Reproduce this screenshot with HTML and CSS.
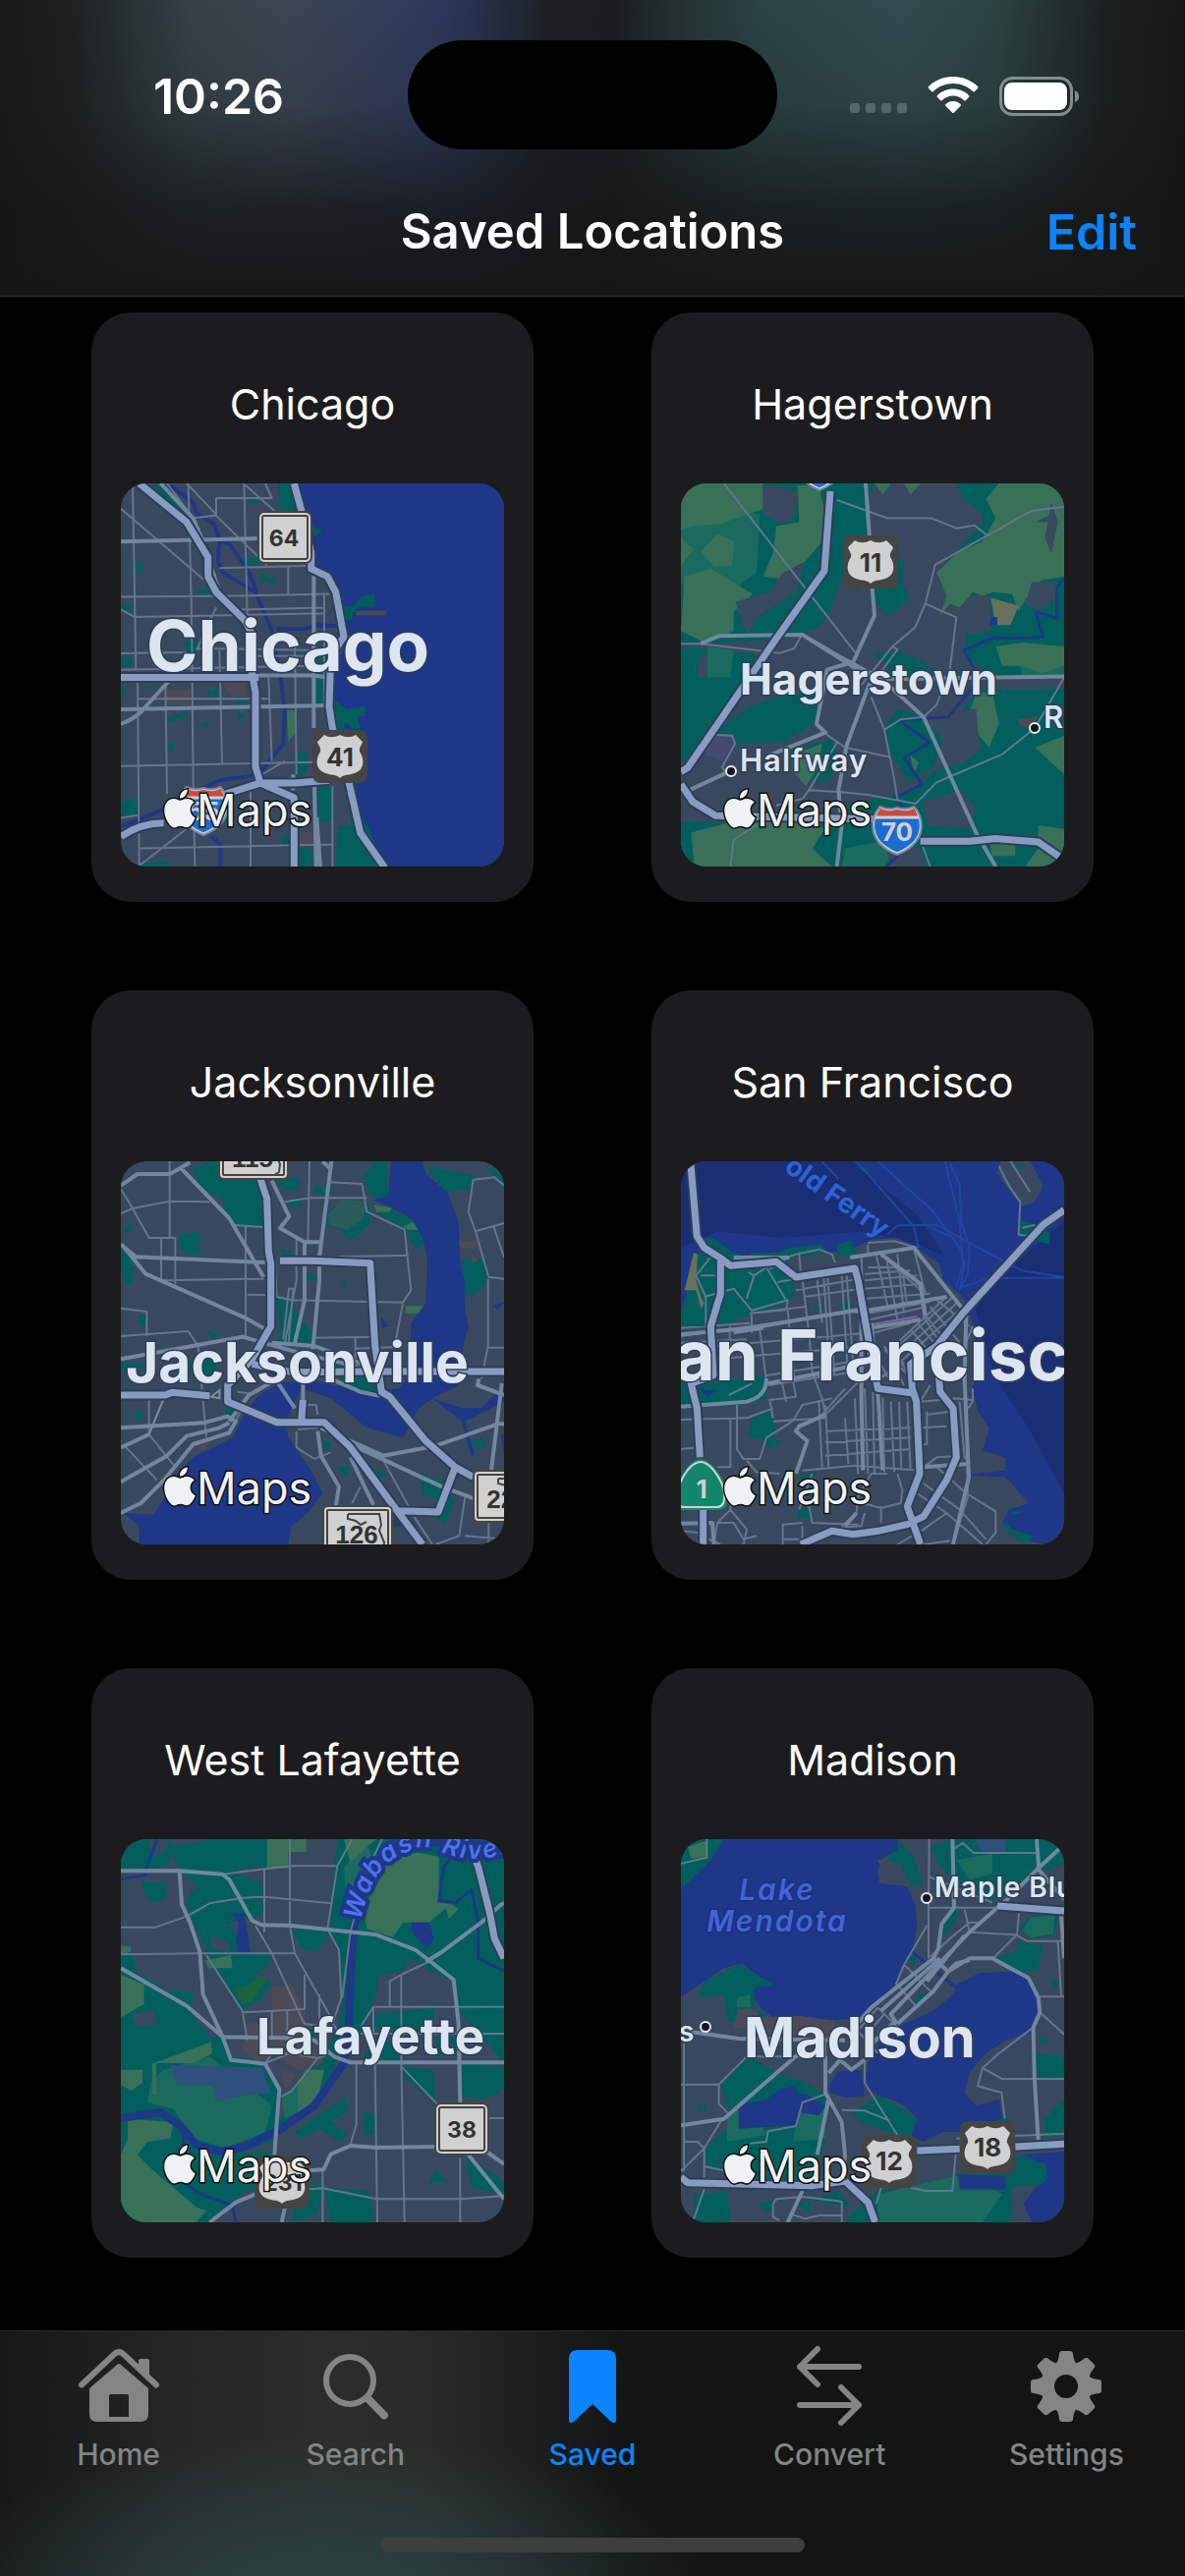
FILE: index.html
```html
<!DOCTYPE html>
<html lang="en">
<head>
<meta charset="utf-8">
<meta name="viewport" content="width=device-width, initial-scale=1">
<title>Saved Locations</title>
<link rel="stylesheet" href="styles.css">
</head>
<body>

<svg class="sprites" aria-hidden="true">
  <symbol id="apple" viewBox="-1 -1 26 26">
    <path d="M12.152 6.896c-.948 0-2.415-1.078-3.96-1.04-2.04.027-3.91 1.183-4.961 3.014-2.117 3.675-.546 9.103 1.519 12.09 1.013 1.454 2.208 3.09 3.792 3.039 1.52-.065 2.09-.987 3.935-.987 1.831 0 2.35.987 3.96.948 1.637-.026 2.676-1.48 3.676-2.948 1.156-1.688 1.636-3.325 1.662-3.415-.039-.013-3.182-1.221-3.22-4.857-.026-3.04 2.48-4.494 2.597-4.559-1.429-2.09-3.623-2.324-4.39-2.376-2-.156-3.675 1.09-4.61 1.09zM15.53 3.83c.843-1.012 1.4-2.427 1.245-3.83-1.207.052-2.662.805-3.532 1.818-.78.896-1.454 2.338-1.273 3.714 1.338.104 2.715-.688 3.559-1.701z"/>
  </symbol>
  <symbol id="us-shield" viewBox="0 0 56 54">
    <rect width="56" height="54" rx="8" fill="#444"/>
    <path fill="#d0d0d0" d="M28 49C24 44 14 47 8 41C3 36 4 28 8 22C9 18 6 16 5 12L12 5C17 8 22 8 28 5C34 8 39 8 44 5L51 12C50 16 47 18 48 22C52 28 53 36 48 41C42 47 32 44 28 49Z"/>
  </symbol>
  <symbol id="interstate" viewBox="0 0 54 54">
    <path fill="#d0d0d0" stroke="#7886a3" stroke-width="2" d="M9 2C15 5 21 5 27 3C33 5 39 5 45 2C52 10 54 20 52 29C49 41 39 48 27 53C15 48 5 41 2 29C0 20 2 10 9 2Z"/>
    <path fill="#1b6cd0" d="M4 15H50C53 31 46 42 27 50C8 42 1 31 4 15Z"/>
    <path fill="#c94b42" d="M9 4C15 7 21 7 27 5C33 7 39 7 45 4L49 12H5Z"/>
  </symbol>
  <symbol id="state-sign" viewBox="0 0 56 54">
    <rect width="56" height="54" rx="7" fill="#444"/>
    <rect x="2" y="2" width="52" height="50" rx="5" fill="#d0d0d0"/>
    <rect x="5" y="5" width="46" height="44" rx="2" fill="none" stroke="#444" stroke-width="2"/>
  </symbol>
  <symbol id="florida-sign" viewBox="0 0 72 54">
    <rect width="72" height="54" rx="6" fill="#444"/>
    <rect x="2" y="2" width="68" height="50" rx="4" fill="#d0d0d0"/>
    <rect x="5" y="5" width="62" height="44" rx="1" fill="none" stroke="#444" stroke-width="2"/>
    <path d="M26 9H58L60 20L58 26L63 38L62 46L57 49M26 9V14L34 16L39 20L45 17" fill="none" stroke="#444" stroke-width="2"/>
  </symbol>
</svg>

<header class="top">
  <div class="status">
    <span class="time">10:26</span>
    <span class="island"></span>
    <div class="indicators">
      <svg width="58" height="38" viewBox="0 0 58 38" aria-hidden="true" fill="#55676a"><rect y="27" width="10" height="10" rx="3"/><rect x="16" y="27" width="10" height="10" rx="3"/><rect x="32" y="27" width="10" height="10" rx="3"/><rect x="48" y="27" width="10" height="10" rx="3"/></svg>
      <svg width="52" height="38" viewBox="0 0 52 38" aria-hidden="true" fill="#fff"><path d="M26 0C36 0 45 4 51 10Q52 11 51 12L48 15Q47 16 46 15C41 10 34 7 26 7S11 10 6 15Q5 16 4 15L1 12Q0 11 1 10C7 4 16 0 26 0Z"/><path d="M26 12.500C32 12.500 38 15 42 19Q43 20 42 21L39 24Q38 25 37 24C34 21 30 19.500 26 19.500S18 21 15 24Q14 25 13 24L10 21Q9 20 10 19C14 15 20 12.500 26 12.500Z"/><path d="M26 25C29 25 31.500 26 33.500 28Q34.500 29 33.500 30L27 36.500Q26 37.500 25 36.500L18.500 30Q17.500 29 18.500 28C20.500 26 23 25 26 25Z"/></svg>
      <svg width="82" height="40" viewBox="0 0 82 40" aria-hidden="true"><rect x="1.500" y="1.500" width="72" height="37" rx="12" fill="none" stroke="#828d8f" stroke-width="3"/><rect x="5" y="6" width="64" height="28" rx="8" fill="#fff"/><path d="M77 14Q81 16 81 20T77 26Z" fill="#828d8f"/></svg>
    </div>
  </div>
  <nav class="navbar">
    <h1>Saved Locations</h1>
    <button class="edit" type="button">Edit</button>
  </nav>
</header>

<main class="grid">
  <article class="card">
    <h2>Chicago</h2>
    <svg class="map" viewBox="0 0 390 390" role="img" aria-label="Map of Chicago">
      <svg width="390" height="390" viewBox="99 460 1170 987" preserveAspectRatio="none">
        <path class="water" d="M628 460H1269V1447H905L830 1360 815 1230 850 1100 755 1090 745 960 790 860 760 740 720 690 680 660 655 540Z"/>
        <path class="park" d="M580 460H628L652 534H585ZM145 665H165V690H145ZM99 768L130 775V792H99ZM333 732H368V747H340ZM525 688L550 705 572 700V720L545 712 527 716ZM490 500H520V512H490ZM455 665L520 645V670H470ZM680 570L715 580 690 598ZM780 778L812 775 835 752 875 745V775L815 783 800 815 780 808 770 795ZM692 875H715V1025H695ZM752 1018L790 1042 843 1035 845 1058 820 1058 830 1090 810 1095 785 1075 778 1100H745ZM99 905L130 910V930H99ZM365 992L395 988V1010H365ZM240 1068L298 1046 300 1062 245 1078ZM335 1085L365 1072V1088ZM455 1020L485 1010V1040L460 1080ZM240 1128H262V1148H240ZM640 1150L668 1150V1210H635ZM700 1240H745V1330H700ZM795 1232L820 1232 815 1280 910 1447H755L760 1345 800 1340ZM645 1400L680 1400 685 1447H645ZM99 1280L150 1270V1310L99 1325ZM160 1440L245 1432V1447H160ZM590 1370L610 1360V1390H590ZM160 460L230 470 310 540 270 530ZM290 870L330 862V905H310ZM99 980L110 985V1010H99ZM170 985L215 978V984L175 990Z"/>
        <path class="grass" d="M605 1045H635V1100L610 1125Z"/>
        <path class="urban" d="M235 992H312V1030H235ZM405 970H480V1010H440ZM645 1358L685 1360V1390H645ZM455 1040H485L470 1055ZM815 788H910L905 800H818Z"/>
        <path class="river" d="M250 465L320 510 330 535 385 565 400 610 395 660 410 690 510 740 560 840 585 950 600 1050 595 1130 520 1210 400 1225 350 1245 200 1310 99 1345M400 610L430 615 490 690 515 740M575 835L660 835 700 825 780 828M375 1370L403 1390V1447" />
        <path class="minor" d="M135 460L145 940M305 460L315 800 320 1240 325 1447M475 460L485 800 490 950M150 950L155 1447M235 970L240 1260M400 890L408 1180M390 545V498H560L540 460M240 460L320 550 388 542 545 670M99 525L355 710M300 460L390 540M480 465L580 540M99 752L450 750 735 745M99 785L140 804 720 795M99 898L300 895M330 890L390 780M99 940L700 930M99 1188L700 1178M150 1015H550M155 1400L745 1390M155 1445L330 1330M99 1322L150 1315M330 885L715 890M610 675V750M400 678L690 672M550 960L560 1175M630 870L635 1210M720 745V1035M495 1240V1447M745 1240V1447M520 1215L600 1175M460 785L720 780M500 905H690"/>
        <path class="major" d="M99 610L515 602M99 1042L740 1032M99 1080Q150 1065 180 1030L245 970M688 670V1090M690 1240L695 1447M697 1320L708 1447M740 895L735 960 685 955H500M220 460L320 550 350 610 400 740 415 760M625 1210V1250"/>
        <g class="highways">
          <path class="casing" d="M155 460L300 560 365 650V700L390 740 480 815 500 850V950L510 1000V1190L525 1232H630L735 1225M99 960H520M99 1370Q160 1335 230 1335M400 1265L525 1232 628 1270V1447M628 460L655 545 680 640V680L730 700 755 740 780 855 740 905 735 1035 745 1090 795 1230 830 1360 905 1450"/>
          <path class="hwy" d="M155 460L300 560 365 650V700L390 740 480 815 500 850V950L510 1000V1190L525 1232H630L735 1225M99 960H520M99 1370Q160 1335 230 1335M400 1265L525 1232 628 1270V1447M628 460L655 545 680 640V680L730 700 755 740 780 855 740 905 735 1035 745 1090 795 1230 830 1360 905 1450"/>
        </g>
      </svg>
      <use href="#state-sign" x="139" y="28" width="56" height="54"/>
      <text class="sign" x="166" y="64">64</text>
      <use href="#us-shield" x="195" y="251" width="56" height="54"/>
      <text class="sign large" x="223" y="288">41</text>
      <use href="#interstate" x="57" y="307" width="54" height="52"/>
      <text class="sign route" x="84" y="343">55</text>
      <text class="place" x="26" y="191" font-size="71">Chicago</text>
      <use class="credit" href="#apple" x="39" y="310" width="42" height="42"/>
      <text class="credit" x="77" y="349">Maps</text>
    </svg>
  </article>

  <article class="card">
    <h2>Hagerstown</h2>
    <svg class="map" viewBox="0 0 390 390" role="img" aria-label="Map of Hagerstown">
      <svg width="390" height="390" viewBox="99 460 1170 987" preserveAspectRatio="none">
        <path class="park" d="M99 460H690L670 500 660 690 640 740 590 700 550 800 520 830 430 860 250 870 99 870ZM940 460H1269V960H1060L960 900 970 850 1050 840 1040 740 920 760 880 690 1020 560 1020 540 960 500ZM690 680L720 640 780 660 775 720 800 755 730 805 690 760ZM99 880L330 900 280 1010 200 1100 99 1180ZM300 1040L390 1010 520 990 510 1080 400 1130 280 1130 180 1210 200 1100ZM1000 990H1269V1447H850L830 1400 720 1400 590 1447H99V1330L230 1335 560 1330 600 1290 760 1260 830 1240 870 1200 960 1180 1020 1140 980 1080 950 1060ZM690 900L760 890 840 920 880 950 760 960ZM760 1040L840 1060 900 1120 870 1190 800 1230 740 1160 720 1090ZM420 1150L560 1120 590 1180 540 1230 460 1220Z"/>
        <path class="teal" d="M99 500L340 540 330 690 250 740 99 720ZM180 880L260 890 250 960 180 960ZM1130 900L1269 890V960H1140ZM600 1400L720 1380 740 1447H590Z"/>
        <path class="grass" d="M99 460H350L375 490 370 520 300 540 220 565 130 570 99 580ZM390 570L460 560 455 465H520L540 540 530 610 480 660 440 710 350 700 380 640ZM210 590L262 610 255 670 200 675 160 635ZM99 600L140 630 99 670ZM110 700L190 680 240 705 318 745 260 790V840L170 870 99 840ZM1070 460H1269V700L1200 710 1150 760 1130 790 1110 745 1050 740 1020 750 990 740 950 780 920 770 890 800 910 750 880 690 940 640 1020 610 1060 550 1030 500ZM1060 880L1140 870 1269 880V930L1200 950 1140 930 1080 930ZM1000 1000H1050L1070 1080 1040 1140 990 1090 985 1040ZM1180 1140L1269 1110V1210ZM130 1360L260 1330 460 1330 540 1350 500 1400 560 1447H140ZM440 1160L530 1130 520 1190 480 1240 440 1200ZM1190 1340L1269 1350V1447H1150L1190 1400ZM1040 1380L1120 1380V1420H1050ZM800 1160L825 1180 810 1210ZM690 460H740L715 490ZM780 460H830L800 490Z"/>
        <path class="land" d="M348 460L455 480 450 540 410 565 350 540ZM265 765L370 740 410 690 480 660 450 740 340 800 300 850ZM1170 715L1240 712 1245 760 1190 790 1150 770ZM1230 510L1250 560 1230 640 1210 600ZM99 1200L200 1130 290 1160 470 1240 460 1330 230 1335 99 1300ZM150 920L180 890V960L150 960ZM840 1280L960 1250 1000 1300 980 1350 850 1340ZM880 1060L1000 1040 1010 1130 960 1180 900 1160ZM1180 560L1230 540V560Z"/>
        <path class="sand" d="M1045 755L1130 775 1105 825 1060 825Z"/>
        <path class="urban" d="M1125 1070L1185 1060 1180 1085 1140 1090ZM850 1060L880 1080 860 1085Z"/>
        <path fill="#454a74" d="M190 1110L262 1105 265 1130 225 1175 170 1160Z"/>
        <path fill="#1e3788" d="M1045 805L1065 805V825H1042Z"/>
        <path class="stream" d="M1269 705L1247 728V808L1182 790 1205 855 1160 860 1055 857 962 890 1003 950 990 985 915 1062 765 1070 860 1128 780 1165 835 1235 750 1272 775 1290M725 1447L765 1415"/>
        <path class="minor" d="M230 460L640 905M575 503L730 550H865L942 576 995 568 1035 594M1269 520L1170 530 875 670 845 770 815 830 745 880 650 980M845 770L940 805 920 940 880 1030 840 1062 770 1068 720 1095M745 880L760 888 680 980M99 873L160 873 400 897 445 885 465 855M195 1107L255 1110 265 1130 225 1190 235 1205M535 1102L600 1140 735 1165M680 1010L720 1095 750 1220 760 1275M575 1128L490 1250 590 1255 670 1262 815 1285 880 1230 1080 1158 1180 1090 1269 960M490 1250L470 1272 390 1290M330 1340L260 1378 250 1447M835 1390L860 1447"/>
        <path class="major" d="M663 460L675 600M683 730L690 800 625 920 545 940 513 1080 540 1102 370 1160M235 1207L99 1260M160 873L215 853 470 850 580 905 680 950 740 985 840 1062 1000 1360 1060 1447M680 965L1269 957M675 975L605 1135 580 1250 590 1340 575 1447M470 850L620 930 665 960"/>
        <g class="highways">
          <path class="casing" d="M555 480L537 685 390 860 120 1192 99 1203M99 1235L135 1280 205 1316 690 1325M830 1382H980L1060 1375 1190 1384 1269 1430"/>
          <path class="hwy" d="M555 480L537 685 390 860 120 1192 99 1203M99 1235L135 1280 205 1316 690 1325M830 1382H980L1060 1375 1190 1384 1269 1430"/>
        </g>
      </svg>
      <use href="#interstate" x="114" y="-44" width="54" height="52"/>
      <use href="#us-shield" x="165" y="53" width="56" height="54"/>
      <text class="sign large" x="193" y="90">11</text>
      <use href="#interstate" x="193" y="327" width="54" height="52"/>
      <text class="sign route" x="220" y="364">70</text>
      <circle class="dot" cx="51" cy="293" r="5"/>
      <circle class="dot" cx="360" cy="249" r="5"/>
      <text class="place" x="60" y="215" font-size="44">Hagerstown</text>
      <text class="place town" x="60" y="293">Halfway</text>
      <text class="place town" x="369" y="249">R</text>
      <use class="credit" href="#apple" x="39" y="310" width="42" height="42"/>
      <text class="credit" x="77" y="349">Maps</text>
    </svg>
  </article>

  <article class="card">
    <h2>Jacksonville</h2>
    <svg class="map" viewBox="0 0 390 390" role="img" aria-label="Map of Jacksonville">
      <svg width="390" height="390" viewBox="99 36 1170 1170" preserveAspectRatio="none">
        <path class="park" d="M320 60L370 36H400L410 90H515L540 130V235H440L415 200 410 150 380 140 335 110ZM560 80L650 90 635 120 600 125ZM690 110L748 120 740 140 690 135ZM725 195L780 150 845 155 865 190 855 240 795 280 770 245 725 230ZM835 80L880 36H910L915 140 895 155 865 140ZM1030 50L1180 80 1175 120 1090 130ZM1215 55L1269 70V120ZM870 170L930 175 935 190 1005 220 1045 285 1000 305 960 240 880 195ZM610 160L655 155 650 170 615 182ZM275 265L340 250V320L310 325 280 305ZM99 300L135 340V400L125 420 99 380ZM105 240L135 228V250L115 255ZM1140 340L1215 330 1218 400 1180 450 1145 440ZM965 480H1020V500H970ZM572 450L610 460 650 520 685 560 680 600H560L590 560ZM155 500L175 510V545L155 535ZM360 550L400 565 380 580ZM665 375L695 385V400H670ZM99 650L170 655V670L99 678ZM300 650L395 630 390 690 320 690ZM740 650L850 660 880 740 830 740 780 720ZM143 797H167V823H143ZM420 780L440 790V810H420ZM710 880L745 900 730 920ZM755 970L795 965 790 1000ZM880 975L915 990 890 1005ZM1015 990L1110 1020 1115 1080 1090 1145 1060 1130 1085 1080 1020 1050ZM1170 890L1205 880 1210 915 1175 910ZM585 300L635 320 590 325ZM770 400L790 405 785 425Z"/>
        <path class="grass" d="M870 168L925 178 920 190 880 192ZM968 478H1020V500H968ZM960 235L1005 215V245H975Z"/>
        <path fill="#2b5a5b" d="M730 200L775 152 850 158 840 210 790 245 735 230Z"/>
        <path class="water" d="M925 36H1020L1030 75 1095 130 1130 220 1135 340 1150 410V490L1160 540 1145 600 1130 720 1050 760 1010 790 960 880 850 850 740 760 650 730 620 790 605 840 610 880 680 980 715 1050 670 1110 620 1150 610 1206H155V1150L105 1110 200 1115 240 1050 270 990 320 940 440 880 480 800 520 750 590 710 700 710 850 740 950 730 985 680V530L1030 470 1035 330 1020 270 985 210 930 180 870 155 915 140ZM1050 760L1140 790 1200 790 1269 720V770L1150 830 1180 930 1170 940 1140 830ZM893 510L917 540 895 545ZM1235 478L1269 465 1250 490ZM1258 870H1269V930Z"/>
        <path class="urban" d="M1130 278L1205 280 1180 302H1135ZM320 890L375 890 350 920ZM1170 320L1190 335 1170 350Z"/>
        <path class="minor" d="M99 195L135 180 248 158 370 160M248 36V268M99 120L135 180 185 270H265V410M222 270V400M220 400L535 395M440 230L540 238M480 235V580M485 443L570 445M570 340L575 450 620 460 960 467 985 430 965 245 850 190 835 105 735 100M600 160L675 148H850M675 36L670 280M760 328L975 323M635 270V400L600 590M610 600L625 425H612L595 580M960 470L935 600M690 575L880 572M815 570V640M940 603L815 608M99 570L305 555 335 600 360 880M99 485L178 495V570M185 870V765M185 870L265 970M110 905L210 1010M1269 110L1240 85 1175 92 1160 190 1182 250 1222 390 1269 395M1182 250L1269 225M1237 235L1269 330M1220 395V600L1200 700M1220 605H1269M1150 1060L1132 1180 1060 1206M1150 1180L1269 1190M895 940L1000 1130 1050 1206M830 1030L805 1080M635 860V910L690 945 740 925M640 855L700 850M455 740L490 745 450 830M640 780H695L700 810M1222 1110V1206"/>
        <path class="major" d="M99 110L150 75H248L310 40M285 60L430 210 535 390M99 290L145 328 540 345M110 300L175 380 480 515 560 560M99 640L400 585 470 572 640 620 850 670M560 95L613 205 585 240 660 283H705M742 36L705 330V400L685 610M715 36L740 60M660 280V460L630 590M560 590L690 600 850 660M740 700L830 740 890 752M580 715L630 790M655 700V780M99 850L350 835 425 815 450 830 430 865 320 900 230 1010 160 1080 99 1110M99 1015L240 935 300 875 400 850 430 835M430 830L490 750 560 710M99 910L185 870M700 860L710 935 765 1030 755 1090M710 850L900 935 1060 905 1250 838H1269M810 905L1080 1030 1175 1065M800 940L870 1085M1262 715L1230 980M1192 700L1188 720 1269 750"/>
        <path d="M185 870L228 765M375 755L400 735V760Z" fill="none" stroke="#838a95" stroke-width="2"/>
        <g class="highways">
          <path class="casing" d="M525 90L545 150 550 310 557 350V540L500 640 425 720V770L575 833H720L800 910 940 1100 1020 1206M585 340H680L860 347 875 600 895 740 920 755 1030 890 1120 970 1175 1000M1120 970L1068 1107 940 1103M500 655L620 680 850 678H1269M99 750H235L255 742 370 752M655 765L650 830M930 1110L950 1150"/>
          <path class="hwy" d="M525 90L545 150 550 310 557 350V540L500 640 425 720V770L575 833H720L800 910 940 1100 1020 1206M585 340H680L860 347 875 600 895 740 920 755 1030 890 1120 970 1175 1000M1120 970L1068 1107 940 1103M500 655L620 680 850 678H1269M99 750H235L255 742 370 752M655 765L650 830"/>
        </g>
      </svg>
      <use href="#florida-sign" x="99" y="-35" width="72" height="54"/>
      <text class="sign narrow" x="134" y="6">115</text>
      <use href="#florida-sign" x="205" y="350" width="72" height="54"/>
      <text class="sign narrow" x="240" y="389">126</text>
      <use href="#florida-sign" x="358" y="314" width="72" height="54"/>
      <text class="sign narrow" x="394" y="353">228</text>
      <text class="place" x="5" y="225" font-size="57">Jacksonville</text>
      <use class="credit" href="#apple" x="39" y="310" width="42" height="42"/>
      <text class="credit" x="77" y="349">Maps</text>
    </svg>
  </article>

  <article class="card">
    <h2>San Francisco</h2>
    <svg class="map" viewBox="0 0 390 390" role="img" aria-label="Map of San Francisco">
      <svg width="390" height="390" viewBox="39 36 1170 1170" preserveAspectRatio="none">
        <path class="water" d="M39 36H1209V1206H39Z"/>
        <path class="deep" d="M39 36H560L760 200 850 330 760 290 600 250 350 270 150 250 39 300Z"/>
        <path class="deep" d="M1209 220V1050L1100 850 1000 700 960 560 930 460Z"/>
        <path class="land" d="M39 510L60 420 85 320 150 320 240 325 370 310 500 315 570 300 620 275 700 270 760 300 830 350 840 400 900 450 930 530 945 650 930 730 945 800 980 850 960 920 1030 940V980L900 995 1030 1000 1100 1080 1040 1100 1020 1140 1080 1190 1150 1206H39ZM1015 36H1105L1145 110 1120 160 1080 175 1030 110 1005 70Z"/>
        <path class="park" d="M100 270L140 270 190 310 240 330 260 315 330 318 370 300 470 290 480 315 370 330 360 370H385L380 460 300 490 240 510 160 540H39V490L85 370ZM515 290L560 280 575 320 540 330 515 315ZM39 700L140 710 300 690 302 760 230 780 39 785ZM260 815L310 800 330 850 320 890 350 890 310 915 290 885 240 880ZM445 475L475 480V488H445ZM530 465L560 465V485H530ZM550 585L578 585V595H550ZM400 1000L455 985 430 1030ZM1070 215L1130 230 1165 255V290L1070 262ZM580 55L610 60 605 75ZM1040 1085L1050 1105 1095 1105 1050 1115ZM395 1100L440 1090 435 1130 395 1125ZM1025 1130L1050 1160 1118 1180 1085 1206 1030 1160ZM1060 45L1090 50 1070 62Z"/>
        <path class="sand" d="M78 315L90 320 85 400 100 450 110 470 100 485 85 430 50 430Z"/>
        <path fill="#443f6e" d="M640 525L770 495V515L640 545ZM658 555L675 550V575H658Z"/>
        <path fill="#1e3788" d="M90 730L145 738 120 755Z"/>
        <path class="ferry" d="M640 36L810 190 890 300 905 350 890 430M575 36L750 235 765 300M845 36L890 220 900 350 880 420M860 40L890 105 895 220 920 300 915 380 890 430M670 260L700 232 820 230 910 280 1080 370 1209 390M790 232L870 270 895 310M900 420L980 392H1209M470 36L520 90"/>
        <path class="minor" d="M100 385L145 385M110 450L200 425 255 492 365 460 360 490 255 500V560M145 310L85 385 115 450V540M240 455L262 385 245 375M262 385L300 360 360 460M310 365L350 340 375 325 400 318 460 305 500 320 510 345M400 318L405 375M335 405L380 397M250 500L420 480M410 400L430 560 440 680 470 760 480 810M390 430L580 395M415 450L590 425M475 390L495 700M487 390L508 690M530 385L548 670M545 385L565 655M455 400L470 530M365 490L385 700M280 550L300 710M39 545L250 530M39 590L240 580M120 540V620M188 540V600M39 570L600 490M39 610L610 560M150 640L620 600M300 690L610 640M305 720L560 680M345 700L360 770M380 700L390 755 310 765 320 820M590 330L600 560M610 290L610 320 750 300M610 285L690 280 760 300M650 320L770 430 780 510 820 575M635 320L670 480M665 325L700 520M700 320L720 500M715 365L730 480M750 300L785 440M610 360H700M600 380L740 370M600 400L760 385M600 425L780 410M605 455L800 440M610 500L800 465M615 520L790 480M620 535L760 510M625 560L740 530M820 460L920 540M800 480L890 590M780 500L860 600M760 530L830 610M740 550L800 620M870 450L680 620M880 470L690 640M890 490L650 700M850 450L700 590M660 600L720 720M680 590L740 700M640 640L680 710M640 700L720 650M660 610L750 710M540 730L460 820 400 850M590 700L480 810M500 760L410 780 380 830 300 880 280 945H230L210 915V780M39 825L240 820 320 790M320 830L480 820M190 820V970H150M39 915L90 910M240 950L270 985 340 990M480 895L740 880M480 935L740 915M410 980L570 965 770 980M440 990L400 1100M460 770L470 970M480 780L490 970M570 760L580 990M600 730L610 990M625 740L630 990M655 760L660 985M680 770L690 985M705 770L712 980M730 770L740 980M540 820L550 960M480 860L740 850M770 770L890 760M790 810L860 800M770 850L850 845M790 800V900H780M780 970L820 940 890 935M800 720L770 770M930 540L905 600 915 1060 870 1206M930 730L930 770 915 790M870 760L930 765M890 770L905 940 920 960M39 1140L130 1140M150 1140L200 1140 230 1190 270 1180M140 1206L150 1140 190 1100 200 1000M190 1100L240 1160 230 1206M350 1206V1145L410 1140M410 1150V1190H350M530 1150L575 1110 580 1060M580 1060L620 990H670M650 1090V1140M595 1080L650 1095 710 1080 715 1040 700 990M600 1110L590 1150 520 1155M760 1050L850 1110 960 1206M780 1020L890 1100 970 1190M820 970L910 1050 1000 1105V1170L970 1206M850 1110L780 1160 700 1206M780 1206L860 1195M430 1090L440 1140 580 1145M100 1180L160 1206M1010 50L1040 110 1075 160 1070 260 1110 265M1045 36L1105 130M1120 230L1080 240M185 750L255 715M39 1165L90 1170"/>
        <path class="major" d="M39 565L250 545 580 490M200 558L290 545M39 785L240 770Q300 755 300 700M305 715L430 690 610 650M555 330L750 300 870 450 910 500M650 320L770 410 785 505M590 520L590 760 595 980M620 530L640 740 655 980M570 495L620 490 850 450M615 545L770 520M480 810L400 845 390 860 425 890 390 990M470 700L455 680M39 1142L135 1140 140 1206M780 970L915 960M370 330L200 330M575 1110L540 1150M910 500L905 700 918 1000 870 1206"/>
        <g class="highways">
          <path class="casing" d="M68 36L88 265 110 300 165 335 190 355 330 343 390 390 570 363 580 400 615 600 640 730 755 745M160 340V440L130 540 138 690 70 715 88 790 97 940M107 1100V1206M1209 185L1145 230 900 500 820 600 740 655 745 730 758 770 768 990 730 1090 770 1206M820 600L830 740 870 790 880 940 850 1010 780 1120 730 1145 640 1165 565 1175 500 1165 405 1206"/>
          <path class="hwy" d="M68 36L88 265 110 300 165 335 190 355 330 343 390 390 570 363 580 400 615 600 640 730 755 745M160 340V440L130 540 138 690 70 715 88 790 97 940M107 1100V1206M1209 185L1145 230 900 500 820 600 740 655 745 730 758 770 768 990 730 1090 770 1206M820 600L830 740 870 790 880 940 850 1010 780 1120 730 1145 640 1165 565 1175 500 1165 405 1206"/>
        </g>
      </svg>
      <path d="M20 303Q27 303 35 313Q50 330 47 347Q46 356 36 355H4Q-7 356 -7 347Q-7 330 5 313Q14 303 20 303Z" fill="#12866c"/>
      <path d="M20 306Q26 306 33 314Q46 330 44 345Q43 352 36 352H4Q-4 352 -4 345Q-5 330 7 314Q14 306 20 306Z" fill="none" stroke="#d0d0d0" stroke-width="2"/>
      <text class="sign route" x="21" y="343">1</text>
      <text class="lane" transform="translate(104 9) rotate(35)">old Ferry</text>
      <text class="place" x="98" y="223" font-size="71">Francisco</text>
      <text class="place" x="79" y="223" font-size="71" text-anchor="end">San</text>
      <use class="credit" href="#apple" x="39" y="310" width="42" height="42"/>
      <text class="credit" x="77" y="349">Maps</text>
    </svg>
  </article>

  <article class="card">
    <h2>West Lafayette</h2>
    <svg class="map" viewBox="0 0 390 390" role="img" aria-label="Map of West Lafayette">
      <svg width="390" height="390" viewBox="99 36 1170 1170" preserveAspectRatio="none">
        <path class="park" d="M99 36H260L240 120 99 130ZM240 60L380 36H545L600 130 520 120 460 130 340 190 280 130ZM165 165L240 170 235 220 190 230 170 200ZM310 200L440 140 530 170 530 270 480 280 430 290 450 330 500 380 560 390 540 430 500 460 560 470 530 520 470 560 420 490 370 400 320 290 300 230ZM760 36H1269V720L1130 560 1100 470 980 400 960 440 890 450 870 540 830 640 760 700 745 760 680 850 600 900 560 960 420 1010 290 980 99 890V480L200 560 300 640 410 640 430 700 520 710 540 740 580 800V890L630 860 690 740 760 620 780 520 770 400 740 320 700 380 650 370 620 310 730 310 740 220ZM120 360L150 440 240 500 320 500 310 560 370 640 200 660 99 600V380ZM99 870L300 930 380 1000 560 990 550 1100 480 1110 360 1206H99ZM630 930L790 820 790 870 740 900 790 940 770 960 700 920 660 950ZM840 870L880 875V930L840 940ZM960 730L1050 740 1060 840 960 760ZM1130 720L1269 730V800L1210 830 1130 820ZM720 1100L860 1110 870 1206H740ZM640 1080L720 1090 700 1180 620 1206ZM1035 1090L1060 1045 1095 1080ZM1150 1000L1269 1080V1120L1170 1100ZM870 570L1060 550 1050 620 870 620ZM870 660L940 650 950 710 830 710ZM1060 640H1120V700H1060ZM580 600L700 620 690 650 570 650Z"/>
        <path class="teal" d="M230 740L370 700 560 850 540 930 420 980 320 950 260 860 180 840 190 780ZM590 820L720 740 690 840 600 890ZM780 120L850 50 880 130 820 250 790 240Z"/>
        <path class="grass" d="M545 36H665V75H610V125H545ZM780 36H880L850 60 800 110ZM900 100Q960 60 1070 90L1070 220 1100 240 1040 290 960 290 930 335 850 310 840 260ZM99 450L170 480V540L99 580ZM200 720L375 655 378 690 320 720ZM99 740L165 740V780L130 805 99 785ZM120 890L260 900 250 950 180 960 150 1000 190 1040 330 1160 360 1170 330 1206H99V1000L120 950ZM640 790L660 740H720L700 830 640 875ZM195 720H207V815H195ZM340 410L435 390 440 430 360 430ZM99 360L130 365V380L99 390ZM1085 220L1130 250 1100 280Z"/>
        <path class="land" d="M240 370L350 390 370 440 250 470 150 450 150 380ZM180 36H245L240 70 200 90ZM370 330L430 350V380L380 370ZM130 570L200 560 210 600 150 610ZM600 720L680 720 640 770ZM1040 440L1120 470V540H1000Z"/>
        <path class="urban" d="M560 490L620 480 660 560V650L700 680 720 720 640 740 560 690 520 720 470 680 480 600 560 590ZM590 740L630 755 600 810Z"/>
        <path fill="#2f4f7c" d="M248 725L530 735 555 810 470 820 390 838 380 790 270 785Z"/>
        <path fill="#1e3788" d="M985 290L1040 290 1055 340 1035 368 990 325ZM432 262L475 265 485 320 495 388H460L452 350 458 290Z"/>
        <path fill="#19633f" d="M445 495L490 480 530 450 540 470 500 530 470 540Z"/>
        <path class="river wide" d="M99 888L220 870 280 910 330 970 400 990 480 975 590 920 690 850 780 720 795 600 800 480 810 310 845 170 900 90 980 50 1060 45 1150 70 1269 60"/>
        <path class="stream" d="M210 36L175 130M99 158L180 145M290 920V1080L340 1120 440 1155 450 1206M1110 90L1085 120 1070 225 1120 230 1170 190 1190 290V400L1269 438"/>
        <path class="minor" d="M99 305H205L300 272 370 232 470 215 540 212 740 232M410 143L615 118H760M615 36V300L630 385 740 580M805 36L760 118 730 310 765 375 772 520 745 600M897 36L850 130 800 320 775 520M537 130V320M99 388L340 385H630M360 390L470 560 485 650M470 565L660 555V450M510 300L560 385 640 560 660 600 700 605M560 560V640M607 560V640M705 510V600M1040 410L955 450 920 470V545M955 450V720L965 1206M830 610L870 548H1269M870 548V635M830 630H1269M540 720L560 690 620 690 700 705 620 805 590 822M818 720V905L800 970M875 720L882 1206M955 730L1070 850M540 720L640 680M700 705L740 690M1135 1010V1206M675 1105L715 1102 880 1135H1140L1269 1125M715 1050V1206M1220 888H1269M740 590L760 620"/>
        <path class="major" d="M99 133H280L410 143 430 160 500 285 530 298 620 300 880 328 1000 375 1115 465 1130 600 1135 845M278 135L285 235 310 290 340 380 350 510 410 640 435 710 540 722 583 800 575 900 568 1000M99 430L300 545 410 640 600 643 690 650 750 700 800 718H1269M1030 410L1080 380 1200 290 1255 240 1269 230M1065 975L880 978 800 972 740 998 718 1045 675 1048M510 1120L450 1145 370 1206M600 1160L590 1206M1160 1000L1269 1135M1215 990L1269 1028"/>
        <g class="highways">
          <path class="casing" d="M1160 36L1190 120 1225 260 1240 340 1269 400"/>
          <path class="hwy" d="M1160 36L1190 120 1225 260 1240 340 1269 400"/>
        </g>
      </svg>
      <path id="wabash" fill="none" d="M244 83C252 50 262 25 287 15C302 8 310 6 322 11C342 20 367 26 402 10"/>
      <text class="lake river-name"><textPath href="#wabash">Wabash River</textPath></text>
      <use href="#state-sign" x="319" y="268" width="56" height="54"/>
      <text class="sign" x="347" y="304">38</text>
      <use href="#us-shield" x="136" y="322" width="56" height="54"/>
      <text class="sign" x="165" y="358">231</text>
      <text class="place" x="138" y="219" font-size="51">Lafayette</text>
      <use class="credit" href="#apple" x="39" y="310" width="42" height="42"/>
      <text class="credit" x="77" y="349">Maps</text>
    </svg>
  </article>

  <article class="card">
    <h2>Madison</h2>
    <svg class="map" viewBox="0 0 390 390" role="img" aria-label="Map of Madison">
      <svg width="390" height="390" viewBox="39 36 1170 1170" preserveAspectRatio="none">
        <path class="park" d="M39 36H170L130 110 39 190ZM700 36L750 90 775 170 740 180 710 110 640 95ZM800 60L870 36H1209V110L1160 130 1130 120 1060 200 960 230 870 160 830 120ZM220 415L265 450 320 480 265 500 260 550 310 580 470 585 460 620 300 610 180 590 170 510 90 520 110 470ZM870 240L890 260 840 340 830 300ZM1110 270L1190 265 1180 330 1110 340 1070 310ZM990 400L1060 380 1070 350 1140 360 1130 440 1050 440ZM730 400L760 390 750 430ZM755 520L790 500V520L755 550ZM160 790L240 700 360 760 420 780 480 820 480 960 440 1080 240 1070 120 1040 110 980 200 900ZM560 870L640 820 720 860 760 890 740 940 700 940 590 900ZM1120 690L1209 700V770H1130ZM1150 890L1209 830V940L1150 950ZM950 900L1030 880 1060 930 890 950ZM1000 1010L1209 990V1080L1050 1100V1206H540L560 1180 640 1110 760 1100 880 1060ZM80 1120L180 1110 190 1206H80ZM270 1150L330 1140 310 1180ZM440 1140L520 1110 560 1160 500 1150ZM90 850L115 845V870H95ZM1160 460L1190 470 1185 495ZM1130 640L1165 650 1140 665ZM390 1150L440 1140 430 1180Z"/>
        <path class="grass" d="M60 60L118 40V90L70 95Z"/>
        <path class="teal" d="M880 100L990 80V140L920 160ZM1110 275L1180 268 1175 325 1110 338 1080 315ZM180 870L260 850 300 940 180 960ZM400 860L480 850V950L380 960ZM640 1120L900 1060 1020 1120 960 1206H640ZM210 520L250 510 250 550 210 550Z"/>
        <path class="water" d="M170 36H700V70L660 90 640 130 645 170 730 180 755 240 760 300 745 380 700 470 640 540 590 580 500 590 400 580 320 580 290 560 260 520 265 490 320 480 270 450 225 415 170 430 110 470 39 520V190L80 150 130 100ZM610 720L650 650 720 600 810 560 870 510 880 480 950 445 1050 440 1100 465 1130 520 1130 590 1100 630 1030 650 970 690 920 750 905 810 940 850 1010 830 1020 890 900 930 840 930 780 960 740 945 760 890 720 850 680 830 640 820 600 790ZM490 790L520 745 590 740 600 820 540 825 495 810ZM215 850L300 830 340 800 420 815 480 850 460 880 400 870 390 910 215 920ZM885 1060L1030 1065V1105H890ZM1080 1000L1209 990V1206H1110L1085 1150 1120 1100 1155 1080 1155 1030ZM340 800L385 790 395 810Z"/>
        <path class="urban" d="M215 555L265 555 280 580 400 575 510 590 500 660 420 640 300 630 200 610ZM640 100L680 90 650 120Z"/>
        <path fill="#2f4f7c" d="M935 36H1030V75H960Z"/>
        <path class="stream" d="M745 380L880 490"/>
        <path class="minor" d="M39 110L118 92V36M797 36L795 245V400M798 245H1000M872 65L900 48 932 78H1125M795 150L990 230M905 250L920 320 1062 328 1095 347H1209M1072 250L1065 328 992 400M1190 350L1200 515M1130 517H1209M790 300L720 420 695 480M800 395L860 340 920 290H945M740 440L800 500M700 480L760 550M720 420L760 455M640 550L700 610M1135 565L1209 632M1115 610L1010 690 960 735 945 790 1018 810 1028 890M960 735L1020 768H1209M600 710V780L700 940M530 863L600 865 675 895M240 700L155 785V845L185 875M39 785H155M48 660V1050M165 890L110 980 39 1050M110 980V1070M110 980L90 960H50M110 1035L180 1050M480 815L410 840 390 912 305 928 300 960 250 965M320 1150L330 1135 410 1128 530 1142V1206M320 1150V1190L340 1200M370 1180L420 1195 460 1185H530M110 1105L75 1206M740 1100L785 1110H868L878 995M880 950L1209 935M650 1100L635 1150M240 700H480L480 650M580 620L640 550M600 640L660 570M620 660L690 590M560 600L640 690"/>
        <path class="major" d="M1125 36L1132 130 1209 220M1200 60L1130 125 1040 215 1000 250 920 320 680 570 695 595 600 680M868 36L873 245 835 295 825 370 810 400 620 550 560 620M810 400L855 440 810 500 700 600M855 440L920 400 990 400 1100 460 1130 520 1135 565 1115 610 1118 760 1130 955M860 435L880 415 920 405M905 330L790 470M39 620L215 645 540 650M400 690L170 890 39 910M600 710L560 740 525 710 490 750M480 700V810L530 900 540 1000 535 1080M490 830L455 1000M410 1110L365 1206M1200 270L1209 400M830 400L650 560"/>
        <g class="highways">
          <path class="casing" d="M1005 240L1209 255M39 1068L60 1085 440 1094 540 1080M760 987L890 982M1060 975L1209 967M540 1080L610 1145 632 1206"/>
          <path class="hwy" d="M1005 240L1209 255M39 1068L60 1085 440 1094 540 1080M760 987L890 982M1060 975L1209 967M540 1080L610 1145 632 1206"/>
        </g>
      </svg>
      <text class="lake" x="98" y="62" text-anchor="middle">Lake</text>
      <text class="lake" x="98" y="94" text-anchor="middle">Mendota</text>
      <circle class="dot" cx="250" cy="60" r="5"/>
      <circle class="dot" cx="25" cy="191" r="5"/>
      <text class="place village" x="258" y="59">Maple Bluff</text>
      <text class="place village" x="-2" y="206">s</text>
      <use href="#us-shield" x="184" y="301" width="56" height="54"/>
      <text class="sign large" x="212" y="337">12</text>
      <use href="#us-shield" x="284" y="287" width="56" height="54"/>
      <text class="sign large" x="312" y="323">18</text>
      <text class="place" x="64" y="222" font-size="56">Madison</text>
      <use class="credit" href="#apple" x="39" y="310" width="42" height="42"/>
      <text class="credit" x="77" y="349">Maps</text>
    </svg>
  </article>
</main>

<footer class="bottom">
  <nav class="tabs">
    <a href="#home">
      <svg width="84" height="84" viewBox="0 0 84 84" aria-hidden="true"><path d="M4 40.500L37.500 9Q42 5 46.500 9L80 40.500" fill="none" stroke="currentColor" stroke-width="6" stroke-linecap="round"/><path d="M64 14H71Q73 14 73 16V35L62 25V16Q62 14 64 14Z" fill="currentColor"/><path fill="currentColor" fill-rule="evenodd" d="M42 19Q43 19 44 20L72 44V70Q72 78 64 78H20Q12 78 12 70V44L40 20Q41 19 42 19ZM34 50Q32 50 32 52V73H52V52Q52 50 50 50Z"/></svg>
      <span>Home</span>
    </a>
    <a href="#search">
      <svg width="84" height="84" viewBox="0 0 84 84" aria-hidden="true" fill="none" stroke="currentColor" stroke-linecap="round"><circle cx="36" cy="36" r="24" stroke-width="6"/><path d="M54 54L71 71.500" stroke-width="8"/></svg>
      <span>Search</span>
    </a>
    <a href="#saved" class="active" aria-current="page">
      <svg width="84" height="84" viewBox="0 0 84 84" aria-hidden="true" fill="currentColor"><path d="M27 5H57Q66 5 66 14V76Q66 81 61 78L42 60 23 78Q18 81 18 76V14Q18 5 27 5Z"/></svg>
      <span>Saved</span>
    </a>
    <a href="#convert">
      <svg width="84" height="84" viewBox="0 0 84 84" aria-hidden="true" fill="none" stroke="currentColor" stroke-width="6" stroke-linecap="round" stroke-linejoin="round"><path d="M72 22H12M30 4L12 22 30 40M12 61H72M54 43L72 61 54 79"/></svg>
      <span>Convert</span>
    </a>
    <a href="#settings">
      <svg width="84" height="84" viewBox="-42 -42 84 84" aria-hidden="true" fill="currentColor"><circle r="19" fill="none" stroke="currentColor" stroke-width="14"/><path id="tooth" d="M-11 -22Q-8 -25 -7 -33Q-7 -36 -4 -36H4Q7 -36 7 -33Q8 -25 11 -22Z"/><use href="#tooth" transform="rotate(45)"/><use href="#tooth" transform="rotate(90)"/><use href="#tooth" transform="rotate(135)"/><use href="#tooth" transform="rotate(180)"/><use href="#tooth" transform="rotate(225)"/><use href="#tooth" transform="rotate(270)"/><use href="#tooth" transform="rotate(315)"/></svg>
      <span>Settings</span>
    </a>
  </nav>
  <div class="home-indicator"></div>
</footer>
</body>
</html>
```
FILE: styles.css
```css
* { box-sizing: border-box; }

body {
  margin: 0;
  min-height: 100vh;
  display: flex;
  flex-direction: column;
  background: #000;
  color: #fff;
  font-family: Inter, "Liberation Sans", sans-serif;
}

.sprites { display: none; }

/* Header: status row and navigation title over a blurred backdrop */
.top {
  height: 302px;
  padding-top: 41px;
  border-bottom: 1px solid #2a2b2b;
  background:
    linear-gradient(rgb(20 22 21 / 0) 0, rgb(20 22 21 / 0.15) 35%, rgb(20 22 21 / 0.75) 70%, #151716 100%),
    linear-gradient(90deg, #171918 0, #1d2120 6%, #344146 16%, #3b4552 24%, #303b5c 35%, #2b365a 38%, #1d2127 46%, #1b1e1f 52%, #24302f 57%, #2b4344 64%, #314a50 76%, #2c4342 84%, #1c2221 93%, #151716 100%);
}

.status {
  display: grid;
  grid-template-columns: 1fr 376px 1fr;
  align-items: center;
}

.time {
  padding: 2px 0 0 30px;
  text-align: center;
  font-size: 50px;
  font-weight: 600;
}

.island {
  height: 111px;
  border-radius: 56px;
  background: #000;
}

.indicators {
  display: flex;
  justify-content: flex-end;
  gap: 21px;
  padding: 2px 107px 0 0;
}

.navbar {
  display: grid;
  grid-template-columns: 1fr auto 1fr;
  align-items: center;
  padding: 54px 49px 0;
}

.navbar h1 {
  grid-column: 2;
  margin: 0;
  font-size: 49px;
  line-height: 60px;
  font-weight: 600;
}

.edit {
  justify-self: end;
  padding: 0;
  border: 0;
  background: none;
  color: #0a84ff;
  font: 600 50px/60px Inter, "Liberation Sans", sans-serif;
}

/* Cards */
.grid {
  flex: 1;
  display: grid;
  grid-template-columns: 1fr 1fr;
  align-content: start;
  gap: 90px 120px;
  padding: 16px 93px 74px;
}

.card {
  padding: 0 30px 36px;
  border-radius: 40px;
  background: #1c1c1e;
}

.card h2 {
  margin: 0;
  padding: 66px 0 54px;
  text-align: center;
  font-size: 43px;
  line-height: 54px;
  font-weight: 400;
}

/* Map thumbnails */
.map {
  display: block;
  width: 100%;
  border-radius: 26px;
  background: #38495f;
}

path { vector-effect: non-scaling-stroke; }

.land { fill: #38495f; }
.water { fill: #1e3788; }
.deep { fill: #1a2e74; }
.park { fill: #005f5d; }
.teal { fill: #1a6a5e; }
.grass { fill: #387058; }
.sand { fill: #69705e; }
.urban { fill: #4b4a56; }

.river, .stream, .ferry, .minor, .major, .casing, .hwy {
  fill: none;
  stroke-linejoin: round;
}

.river { stroke: #1e3788; stroke-width: 4px; }
.river.wide { stroke-width: 8px; }
.stream { stroke: #1e3788; stroke-width: 3px; }
.ferry { stroke: #1f469f; stroke-width: 2px; }
.minor { stroke: #65748e; stroke-width: 2px; }
.major { stroke: #72869f; stroke-width: 4px; }
.casing { stroke: #2c3e56; stroke-width: 11px; }
.hwy { stroke: #889bc2; stroke-width: 7px; }

.place {
  fill: #dce5f0;
  stroke: #2d3e56;
  stroke-width: 3px;
  paint-order: stroke;
  font-weight: 700;
}

.town { font-size: 31px; font-weight: 600; letter-spacing: 1px; }
.village { font-size: 28px; font-weight: 600; letter-spacing: 1px; }

.lake {
  fill: #4163dd;
  stroke: #1c3178;
  stroke-width: 3px;
  paint-order: stroke;
  font-size: 30px;
  font-style: italic;
  font-weight: 600;
  letter-spacing: 2px;
}

.river-name { fill: #4c72ef; stroke: #1e3788; stroke-width: 8px; font-size: 26px; }

.lane { fill: #2c62d6; font-size: 28px; font-weight: 700; }

.sign {
  fill: #333;
  font-size: 23px;
  font-weight: 700;
  text-anchor: middle;
}

.sign.large { font-size: 26px; }
.sign.route { fill: #d0d0d0; font-size: 26px; }
.sign.narrow { font: 700 26px "Liberation Sans Narrow", "Liberation Sans", sans-serif; }

.dot { fill: #17181f; stroke: #e8eaf0; stroke-width: 2px; }

.credit {
  fill: #f0f1f3;
  stroke: #111;
  stroke-width: 3px;
  paint-order: stroke;
  font-size: 45px;
  font-weight: 400;
}

/* Tab bar */
.bottom {
  height: 250px;
  border-top: 1px solid #272828;
  background:
    radial-gradient(ellipse 400px 180px at 27% 112%, #2b4340 0, rgb(43 65 61 / 0.8) 35%, rgb(43 65 61 / 0) 100%),
    linear-gradient(90deg, #161817 0, #1b1d1c 6%, #252626 15%, #2b2c2b 27%, #292a29 36%, #1a1c1b 47%, #131514 53%, #131514 100%);
}

.tabs {
  display: grid;
  grid-template-columns: repeat(5, 1fr);
  padding-top: 14px;
}

.tabs a {
  display: flex;
  flex-direction: column;
  align-items: center;
  gap: 8px;
  color: #838484;
  font-size: 30px;
  line-height: 38px;
  font-weight: 500;
  text-decoration: none;
}

.tabs .active { color: #0a84ff; }

.home-indicator {
  width: 432px;
  height: 15px;
  margin: 66px auto 0;
  border-radius: 8px;
  background: #3d3f3e;
}
```
